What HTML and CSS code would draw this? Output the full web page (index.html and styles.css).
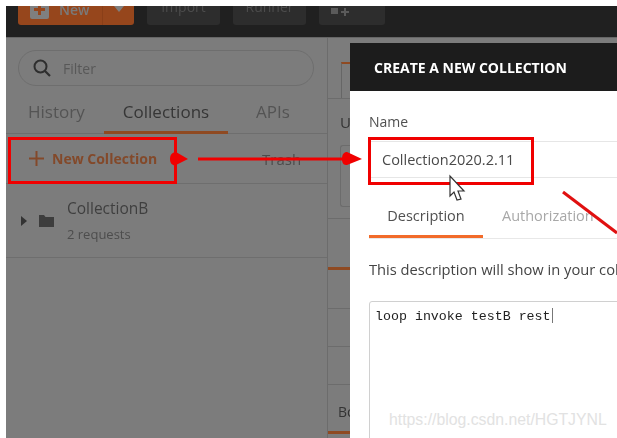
FILE: index.html
```html
<!DOCTYPE html>
<html lang="en">
<head>
    <meta charset="UTF-8">
    <title>Create a new collection</title>
    <link rel="stylesheet" href="styles.css">
</head>
<body>
    <div class="app">
        <div class="topbar">
            <div class="new-btn">
                <svg class="new-plus" width="19" height="19" viewBox="0 0 19 19">
                    <rect width="19" height="19" rx="2" fill="#7f7f7f"/>
                    <path d="M9.500 4v11M4 9.500h11" stroke="#96461c" stroke-width="3"/>
                </svg>
                <span class="new-label">New</span>
                <span class="new-caret"></span>
            </div>
            <div class="top-btn">Import</div>
            <div class="top-btn">Runner</div>
            <div class="top-btn top-btn-last">
                <svg class="workspace-icon" width="18" height="8" viewBox="0 0 18 8">
                    <path d="M0 0h7v6H0zM10 3h8v2h-8zM13 0h2v8h-2z" fill="#5a5a5a"/>
                </svg>
            </div>
        </div>

        <div class="workspace">
            <div class="sidebar">
                <div class="filter">
                    <svg class="filter-icon" width="20" height="20" viewBox="0 0 20 20">
                        <circle cx="8.5" cy="8.5" r="6" fill="none" stroke="#2e2e2e" stroke-width="2"/>
                        <path d="M13 13l5 5" stroke="#2e2e2e" stroke-width="2.2"/>
                    </svg>
                    <span>Filter</span>
                </div>
                <div class="side-tabs">
                    <div class="side-tab side-tab-history">History</div>
                    <div class="side-tab side-tab-active">Collections</div>
                    <div class="side-tab side-tab-apis">APIs</div>
                </div>
                <div class="actions">
                    <div class="new-collection">
                        <svg class="plus" width="15" height="15" viewBox="0 0 15 15">
                            <path d="M7.500 0v15M0 7.500h15" stroke="#83492a" stroke-width="2"/>
                        </svg>
                        New Collection
                    </div>
                    <div class="trash">Trash</div>
                </div>
                <div class="collection">
                    <span class="arrow"></span>
                    <svg class="folder" width="15" height="12" viewBox="0 0 15 12">
                        <path d="M0 0h5l1.500 2H15v10H0z" fill="#3d3d3d"/>
                    </svg>
                    <div>
                        <div class="collection-name">CollectionB</div>
                        <div class="collection-count">2 requests</div>
                    </div>
                </div>
            </div>

            <div class="main">
                <div class="main-tab"></div>
                <div class="main-url">U</div>
                <div class="main-box"></div>
                <div class="main-line"></div>
                <div class="main-orange"></div>
                <div class="main-row main-row-first"></div>
                <div class="main-row"></div>
                <div class="main-row"></div>
                <div class="main-body">Body</div>
                <div class="main-orange"></div>
            </div>
        </div>
    </div>

    <div class="modal">
        <div class="modal-head">CREATE A NEW COLLECTION</div>
        <div class="modal-body">
            <div class="field-label">Name</div>
            <div class="name-input">Collection2020.2.11</div>
            <div class="modal-tabs">
                <div class="modal-tab modal-tab-active">Description</div>
                <div class="modal-tab">Authorization</div>
            </div>
            <p class="hint">This description will show in your collection's documentation</p>
            <div class="textarea">loop invoke testB rest<span class="text-caret"></span></div>
        </div>
    </div>

    <div class="watermark">https://blog.csdn.net/HGTJYNL</div>

    <!-- red markup drawn over the shot -->
    <div class="mark mark-new"></div>
    <div class="mark mark-name"></div>
    <svg class="arrows" width="617" height="438" viewBox="0 0 617 438">
        <path d="M170 159c0-5 3-7 6-7l12 7-12 6c-3 1-6-1-6-6z" fill="#f00000"/>
        <path d="M198 159H346" stroke="#f00000" stroke-width="3"/>
        <path d="M342 159c0-5 2-7 5-7l15 7-15 6c-3 0-5-1-5-6z" fill="#f00000"/>
        <path d="M563 192L617 233" stroke="#e01010" stroke-width="3"/>
        <path d="M450 176v20l4-4 3 8 4-1-3-8h6z" fill="#fff" stroke="#333" stroke-width="1.200"/>
    </svg>
</body>
</html>
```

FILE: styles.css
```css
html, body {
    margin: 0;
    padding: 0;
    height: 100%;
}

body {
    position: relative;
    width: 617px;
    height: 438px;
    overflow: hidden;
    background-color: #fff;
    font-family: "Open Sans", Arial, sans-serif;
}

.app {
    display: flex;
    flex-direction: column;
    height: 432px;
    margin: 6px 0 0 6px;
    filter: blur(0.6px);
}

/* top bar */
.topbar {
    display: flex;
    align-items: flex-end;
    gap: 13px;
    height: 31px;
    padding: 0 0 12px 12px;
    box-sizing: border-box;
    overflow: hidden;
    background-color: #202020;
    flex-shrink: 0;
}

.new-btn {
    display: flex;
    align-items: center;
    flex-shrink: 0;
    width: 116px;
    height: 32px;
    box-sizing: border-box;
    padding-left: 12px;
    border-radius: 3px;
    background-color: #96461c;
    font-size: 14px;
    font-weight: 600;
}

.new-plus {
    margin-right: 10px;
}

.new-label {
    width: 43px;
    color: #7a7a7a;
}

.new-caret {
    height: 32px;
    padding-left: 11px;
    border-left: 1px solid #8a3f18;
    position: relative;
    width: 0;
}

.new-caret::after {
    content: "";
    position: absolute;
    left: 11px;
    top: 13px;
    border: 5px solid transparent;
    border-top: 6px solid #7f7f7f;
}

.top-btn {
    flex-shrink: 0;
    width: 73px;
    height: 32px;
    border-radius: 3px;
    background-color: #2d2d2d;
    color: #4c4c4c;
    font-size: 14px;
    line-height: 28px;
    text-align: center;
}

.top-btn-last {
    width: 66px;
    box-sizing: border-box;
    padding: 15px 0 0 12px;
    line-height: 0;
    text-align: left;
}

/* left panel */
.workspace {
    display: flex;
    flex: 1;
    min-height: 0;
    border-top: 1px solid #666;
    background-color: #7c7c7c;
}

.sidebar {
    width: 322px;
    flex-shrink: 0;
    box-sizing: border-box;
    padding-top: 12px;
    border-right: 1px solid #6c6c6c;
}

.filter {
    display: flex;
    align-items: center;
    width: 296px;
    height: 36px;
    box-sizing: border-box;
    margin-left: 12px;
    padding-left: 13px;
    border: 1px solid #6e6e6e;
    border-radius: 18px;
    color: #585858;
    font-size: 14px;
}

.filter-icon {
    margin-right: 11px;
}

.side-tabs {
    display: flex;
    height: 43px;
    margin-top: 4px;
    border-bottom: 1px solid #6e6e6e;
    font-size: 17px;
    line-height: 43px;
    color: #545454;
}

.side-tab {
    box-sizing: border-box;
    text-align: center;
}

.side-tab-history {
    width: 98px;
    padding-left: 22px;
    text-align: left;
    white-space: nowrap;
}

.side-tab-active {
    width: 124px;
    height: 44px;
    color: #363636;
    border-bottom: 3px solid #8f4a22;
}

.side-tab-apis {
    width: 90px;
}

.actions {
    display: flex;
    align-items: center;
    height: 49px;
    border-bottom: 1px solid #6e6e6e;
}

.new-collection {
    display: flex;
    align-items: center;
    width: 256px;
    padding-left: 23px;
    box-sizing: border-box;
    color: #83492a;
    font-size: 14px;
    font-weight: 700;
}

.plus {
    margin-right: 8px;
}

.trash {
    color: #4c4c4c;
    font-size: 15px;
}

.collection {
    display: flex;
    align-items: center;
    height: 73px;
    border-bottom: 1px solid #6e6e6e;
}

.arrow {
    margin-left: 15px;
    border: 5px solid transparent;
    border-left: 6px solid #333;
    border-right: 0;
}

.folder {
    margin: 0 13px 0 12px;
}

.collection-name {
    margin-top: -2px;
    color: #3f3f3f;
    font-size: 15.500px;
    line-height: 24px;
}

.collection-count {
    margin-top: 4px;
    color: #4d4d4d;
    font-size: 13px;
    line-height: 20px;
}

/* what shows of the main panel */
.main {
    flex: 1;
    min-width: 0;
    overflow: hidden;
}

.main-tab {
    height: 34px;
    margin: 24px 0 0 13px;
    border-top: 2px solid #8f4a22;
    border-left: 1px solid #666;
}

.main-url {
    height: 46px;
    padding-left: 12px;
    border-top: 1px solid #6c6c6c;
    color: #333;
    font-size: 15px;
    line-height: 46px;
}

.main-box {
    height: 60px;
    margin: 0 0 11px 12px;
    border: 1px solid #6c6c6c;
    border-right: 0;
    border-radius: 3px 0 0 3px;
}

.main-line {
    height: 48px;
    border-top: 1px solid #6c6c6c;
}

.main-orange {
    height: 3px;
    background-color: #8f4a22;
}

.main-row {
    height: 37px;
    border-bottom: 1px solid #6c6c6c;
}

.main-row-first {
    height: 38px;
}

.main-body {
    height: 46px;
    padding-left: 10px;
    color: #333;
    font-size: 14px;
    line-height: 54px;
    white-space: nowrap;
}

/* dialog */
.modal {
    position: absolute;
    left: 350px;
    top: 43px;
    right: 0;
    bottom: 0;
    overflow: hidden;
    background-color: #fff;
    filter: blur(0.4px);
}

.modal-head {
    height: 48px;
    padding-left: 24px;
    background-color: #1c1c1c;
    color: #fff;
    font-size: 14px;
    font-weight: 700;
    line-height: 50px;
    white-space: nowrap;
}

.modal-body {
    padding-left: 19px;
    width: 420px;
}

.field-label {
    margin-top: 20px;
    color: #505050;
    font-size: 14px;
    line-height: 22px;
}

.name-input {
    height: 35px;
    margin-top: 8px;
    padding-left: 13px;
    border-top: 1px solid #e6e6e6;
    border-bottom: 1px solid #e6e6e6;
    color: #4a4a4a;
    font-size: 14.500px;
    line-height: 35px;
}

.modal-tabs {
    display: flex;
    height: 60px;
    border-bottom: 1px solid #e8e8e8;
    font-size: 14.500px;
    line-height: 76px;
    color: #a8a8a8;
}

.modal-tab {
    box-sizing: border-box;
    width: 133px;
    text-align: left;
    white-space: nowrap;
}

.modal-tab-active {
    width: 114px;
    height: 60px;
    margin-right: 19px;
    text-align: center;
    color: #505050;
    border-bottom: 3px solid #f26b2a;
}

.hint {
    margin: 19px 0 0;
    color: #444;
    font-size: 14.700px;
    line-height: 22px;
    white-space: nowrap;
}

.textarea {
    height: 160px;
    margin-top: 21px;
    padding: 6px 0 0 5px;
    border: 1px solid #d0d0d0;
    border-radius: 3px;
    color: #222;
    font-family: "Liberation Mono", monospace;
    font-size: 13.300px;
    line-height: 18px;
    white-space: nowrap;
}

.text-caret {
    display: inline-block;
    width: 1px;
    height: 15px;
    margin-left: 1px;
    vertical-align: -3px;
    background-color: #777;
}

/* overlays */
.watermark {
    position: absolute;
    left: 389px;
    top: 410px;
    color: #e2e2e2;
    font-family: "Liberation Sans", Arial, sans-serif;
    font-size: 15.800px;
    line-height: 20px;
    white-space: nowrap;
}

.mark {
    position: absolute;
    box-sizing: border-box;
    border: 3px solid #f00000;
}

.mark-new {
    left: 8px;
    top: 137px;
    width: 169px;
    height: 47px;
}

.mark-name {
    left: 368px;
    top: 137px;
    width: 166px;
    height: 48px;
}

.arrows {
    position: absolute;
    left: 0;
    top: 0;
}
```
